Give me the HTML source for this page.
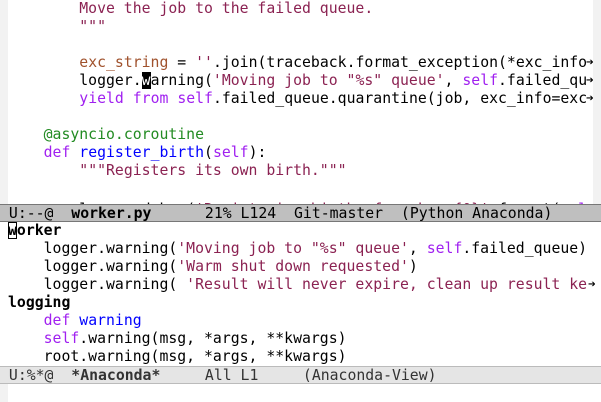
<!DOCTYPE html>
<html><head><meta charset="utf-8"><style>
html,body{margin:0;padding:0;width:601px;height:402px;overflow:hidden;background:#fff;}
body{position:relative;font-family:"DejaVu Sans Mono","Liberation Mono",monospace;font-size:14.8px;color:#000;}
.pane{position:absolute;left:0;overflow:hidden;width:593px;}
.l{position:absolute;left:8px;height:18px;line-height:18px;white-space:pre;}
.s{color:#8b2252}.k{color:#a020f0}.f{color:#0000ff}.d{color:#228b22}.v{color:#a0522d}
b{font-weight:bold}
.fr{position:absolute;background:#f2f2f2;}
.ml{position:absolute;left:0;width:601px;height:17px;line-height:17px;white-space:pre;box-sizing:border-box;}
.ar{position:absolute;left:586px;width:7px;height:18px;line-height:18px;font-size:13px;font-weight:bold;background:#fff;overflow:hidden;}
.cur{background:#000;color:#fff}
.hc{outline:1px solid #000;outline-offset:-1px}
</style></head><body>
<div class="pane" style="top:0;height:204px">
<div class="fr" style="left:0;top:0;width:8px;height:204px"></div>
<div class="l" style="top:0"><span class="s">        Move the job to the failed queue.</span></div>
<div class="l" style="top:18px"><span class="s">        """</span></div>
<div class="l" style="top:54px">        <span class="v">exc_string</span> = <span class="s">''</span>.join(traceback.format_exception(*exc_info</div>
<div class="ar" style="top:54px">➔</div>
<div class="l" style="top:72px">        logger.<span class="cur">w</span>arning(<span class="s">'Moving job to "%s" queue'</span>, <span class="k">self</span>.failed_qu</div>
<div class="ar" style="top:72px">➔</div>
<div class="l" style="top:90px">        <span class="k">yield</span> <span class="k">from</span> <span class="k">self</span>.failed_queue.quarantine(job, exc_info=exc</div>
<div class="ar" style="top:90px">➔</div>
<div class="l" style="top:126px">    <span class="d">@asyncio.coroutine</span></div>
<div class="l" style="top:144px">    <span class="k">def</span> <span class="f">register_birth</span>(<span class="k">self</span>):</div>
<div class="l" style="top:162px">        <span class="s">"""Registers its own birth."""</span></div>
<div class="l" style="top:201px">        logger.debug(<span class="s">'Registering birth of worker {0}'</span>.format(<span class="k">sel</span></div>
</div>
<div class="fr" style="left:593px;top:0;width:8px;height:204px"></div>
<div class="ml" style="top:204px;height:18px;background:#bfbfbf;border:1px solid #777;border-left:none;border-right:none;"> U:--@  <b>worker.py</b>      21% L124  Git-master  (Python Anaconda)</div>
<div class="pane" style="top:222px;height:144px;width:601px">
<div class="l" style="top:0"><b><span class="hc">w</span>orker</b></div>
<div class="l" style="top:18px">    logger.warning(<span class="s">'Moving job to "%s" queue'</span>, <span class="k">self</span>.failed_queue)</div>
<div class="l" style="top:36px">    logger.warning(<span class="s">'Warm shut down requested'</span>)</div>
<div class="l" style="top:54px">    logger.warning( <span class="s">'Result will never expire, clean up result ke</span></div>
<div class="ar" style="top:54px;left:588px">➔</div>
<div class="l" style="top:72px"><b>logging</b></div>
<div class="l" style="top:90px">    <span class="k">def</span> <span class="f">warning</span></div>
<div class="l" style="top:108px">    <span class="k">self</span>.warning(msg, *args, **kwargs)</div>
<div class="l" style="top:126px">    root.warning(msg, *args, **kwargs)</div>
</div>
<div class="ml" style="top:366px;height:18px;background:#e5e5e5;border:1px solid #bbb;border-left:none;border-right:none;color:#333"> U:%*@  <b>*Anaconda*</b>     All L1     (Anaconda-View)</div>
<div class="fr" style="left:0;top:384px;width:8px;height:18px"></div>
</body></html>
